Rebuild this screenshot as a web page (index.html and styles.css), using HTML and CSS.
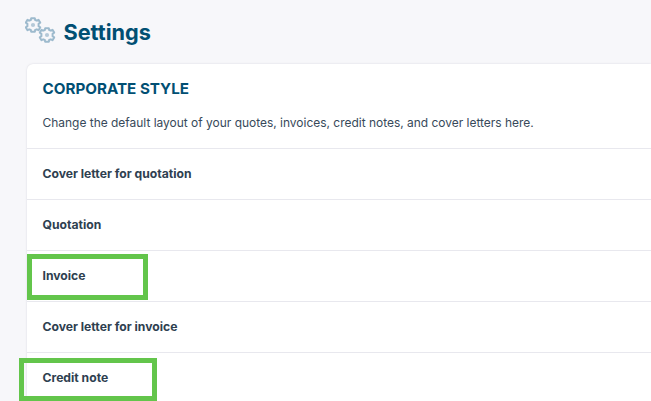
FILE: index.html
```html
<!DOCTYPE html>
<html lang="en">
<head>
<meta charset="utf-8">
<title>Settings</title>
<link rel="stylesheet" href="styles.css">
</head>
<body>
<main class="page">
  <header class="page-header">
    <svg class="gears" viewBox="0 0 32 28" width="32" height="28" aria-hidden="true">
      <defs>
        <g id="gear">
          <path d="M-1.8 -6.8 L1.8 -6.8 L2.2 -5 L3.8 -4.3 L5.5 -5.2 L7.2 -2.4 L5.6 -1.2 L5.6 1.2 L7.2 2.4 L5.5 5.2 L3.8 4.3 L2.2 5 L1.8 6.8 L-1.8 6.8 L-2.2 5 L-3.8 4.3 L-5.5 5.2 L-7.2 2.4 L-5.6 1.2 L-5.6 -1.2 L-7.2 -2.4 L-5.5 -5.2 L-3.8 -4.3 L-2.2 -5 Z" fill="none" stroke="#9dbacd" stroke-width="2" stroke-linejoin="round"/>
          <circle r="2.1" fill="#b5c9d8"/>
        </g>
      </defs>
      <use href="#gear" x="8" y="8"/>
      <use href="#gear" x="22" y="18"/>
    </svg>
    <h1 class="page-title">Settings</h1>
  </header>
  <section class="card">
    <div class="card-intro">
      <h2 class="card-title">CORPORATE STYLE</h2>
      <p class="card-text">Change the default layout of your quotes, invoices, credit notes, and cover letters here.</p>
    </div>
    <div class="row">Cover letter for quotation</div>
    <div class="row">Quotation</div>
    <div class="row">Invoice</div>
    <div class="row">Cover letter for invoice</div>
    <div class="row">Credit note</div>
  </section>
</main>
<div class="mark mark-invoice"></div>
<div class="mark mark-credit"></div>
</body>
</html>
```
FILE: styles.css
```css
html, body {
  margin: 0;
  height: 100%;
  overflow: hidden;
}
body {
  background: #f7f7fa;
  font-family: Inter, "Liberation Sans", sans-serif;
  position: relative;
}
.page {
  padding: 17px 0 0 25px;
}
.page-header {
  display: flex;
  align-items: flex-start;
  gap: 7px;
  height: 47px;
}
.gears {
  flex: none;
}
.page-title {
  margin: 2px 0 0 -0.5px;
  font-size: 21.7px;
  line-height: 27px;
  font-weight: 700;
  color: #014f73;
}
.card {
  margin-left: 2px;
  background: #fff;
  border-radius: 6px 0 0 6px;
  box-shadow: 0 0 2px rgba(60, 60, 90, 0.18);
}
.card-intro {
  height: 84px;
  padding: 0 15.5px;
  overflow: hidden;
}
.card-title {
  margin: 16px 0 0;
  font-size: 15.2px;
  line-height: 18px;
  font-weight: 650;
  color: #014f73;
}
.card-text {
  margin: 16px 0 0;
  font-size: 11.96px;
  line-height: 18px;
  color: #37495a;
}
.row {
  height: 50px;
  border-top: 1px solid #e8e8ee;
  padding: 0 15.5px;
  font-size: 12.15px;
  line-height: 50px;
  font-weight: 650;
  color: #2e4050;
}
.mark {
  position: absolute;
  box-sizing: border-box;
  border: 5px solid #63c54b;
}
.mark-invoice {
  left: 27px;
  top: 254px;
  width: 121px;
  height: 46px;
}
.mark-credit {
  left: 19px;
  top: 358px;
  width: 138px;
  height: 43px;
}
```
